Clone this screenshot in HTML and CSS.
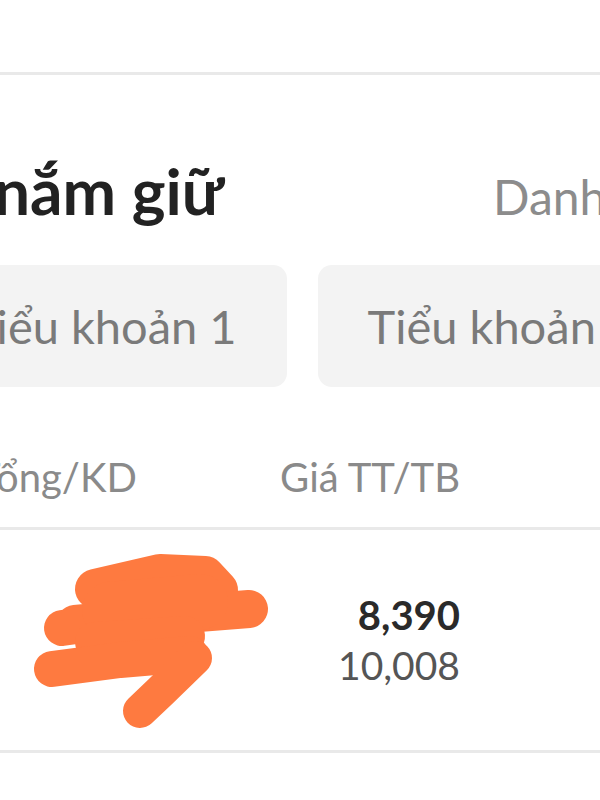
FILE: index.html
```html
<!DOCTYPE html>
<html>
<head>
<meta charset="UTF-8">
<title>Danh mục nắm giữ</title>
<link rel="stylesheet" href="styles.css">
</head>
<body>
	<div class="top-space"></div>
	<div class="rule thick"></div>

	<div class="holdings">
		<div class="title-row">
			<h1 class="title">nắm giữ</h1>
			<a class="link">Danh mục</a>
		</div>

		<div class="tabs">
			<div class="tab">Tiểu khoản 1</div>
			<div class="tab">Tiểu khoản 2</div>
		</div>

		<div class="grid head">
			<div class="col-name"><span class="cut">Tổng/KD</span></div>
			<div class="col-price">Giá TT/TB</div>
		</div>
		<div class="rule"></div>

		<div class="grid row">
			<div class="col-name">
				<!-- redacted ticker -->
				<svg class="scribble" width="280" height="200" viewBox="0 0 280 200">
					<g fill="none" stroke="#fe7a40" stroke-linecap="round" stroke-linejoin="round">
						<path d="M95 49 L160 34 L205 36 L218 50" stroke-width="40"/>
						<path d="M75 84 L160 76 L249 69" stroke-width="38"/>
						<path d="M62 88 L120 80" stroke-width="36"/>
						<path d="M110 70 L200 62" stroke-width="56"/>
						<path d="M95 102 L185 96" stroke-width="40"/>
						<path d="M52 129 L120 120 L190 114" stroke-width="36"/>
						<path d="M195 118 L160 152 L140 171" stroke-width="34"/>
					</g>
				</svg>
			</div>
			<div class="col-price">
				<div class="price">8,390</div>
				<div class="avg">10,008</div>
			</div>
		</div>
		<div class="rule"></div>
	</div>
</body>
</html>
```
FILE: styles.css
```css
body
{
	margin: 0;
	width: 600px;
	height: 800px;
	overflow: hidden;
	background: #fff;
	font-family: "Lato", "Noto Sans", sans-serif;
}

.top-space
{
	height: 72px;
}

.rule
{
	height: 3px;
	background: #e9e9e9;
}

.holdings
{
	overflow: hidden;
}

.title-row
{
	display: flex;
	align-items: baseline;
	height: 150px;
	white-space: nowrap;
}

.title
{
	margin: 0 0 0 -6px;
	font-size: 64px;
	font-weight: bold;
	color: #222;
	line-height: 232px;
	flex: 1;
}

.link
{
	font-size: 48px;
	color: #8c8c8c;
	margin-right: -120px;
	width: 227px;
}

.tabs
{
	display: flex;
	gap: 31px;
	margin-left: -81px;
	margin-top: 40px;
	white-space: nowrap;
}

.tab
{
	flex-shrink: 0;
	height: 122px;
	line-height: 122px;
	padding: 0 50px;
	border-radius: 14px;
	background: #f3f3f3;
	font-size: 47px;
	color: #7a7a7a;
}

.grid
{
	display: grid;
	grid-template-columns: 260px 200px;
}

.head
{
	height: 140px;
	align-items: end;
	font-size: 40px;
	color: #8a8a8a;
	line-height: 100px;
}

.head .col-price
{
	text-align: right;
}

.cut
{
	margin-left: -23px;
}

.row
{
	height: 220px;
	align-items: center;
}

.scribble
{
	display: block;
}

.row .col-price
{
	text-align: right;
}

.price
{
	font-size: 40px;
	font-weight: bold;
	color: #2a2a2a;
	line-height: 50px;
}

.avg
{
	font-size: 39px;
	color: #555;
	line-height: 50px;
}
```
